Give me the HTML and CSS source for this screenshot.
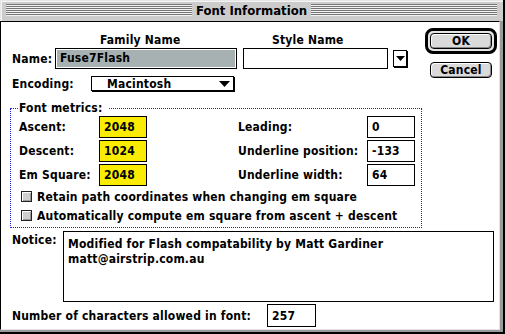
FILE: index.html
```html
<!DOCTYPE html>
<html>
<head>
<meta charset="utf-8">
<link rel="stylesheet" href="styles.css">
</head>
<body>
<div class="window">
  <div class="titlebar">
    <div class="stripes"></div>
    <div class="title">Font Information</div>
    <div class="stripes"></div>
  </div>
  <div class="content">
    <div class="top">
      <div class="fields">
        <div class="headers">
          <span class="h-family">Family Name</span>
          <span class="h-style">Style Name</span>
        </div>
        <div class="name-row">
          <span class="lbl-name">Name:</span>
          <div class="field f-family"><div class="hl">Fuse7Flash</div></div>
          <div class="field f-style"></div>
          <div class="dropbtn"><svg width="9" height="5" viewBox="0 0 9 5"><polygon points="0,0 9,0 4.5,5" fill="#000"/></svg></div>
        </div>
        <div class="enc-row">
          <span class="lbl-enc">Encoding:</span>
          <div class="popup"><span>Macintosh</span><svg width="11" height="6" viewBox="0 0 11 6"><polygon points="0,0 11,0 5.5,6" fill="#000"/></svg></div>
        </div>
      </div>
      <div class="buttons">
        <div class="okring"><div class="btn">OK</div></div>
        <div class="btn cancel">Cancel</div>
      </div>
    </div>
    <fieldset class="metrics">
      <legend>Font metrics:</legend>
      <div class="grid">
        <span>Ascent:</span><div class="num yellow">2048</div><span></span><span>Leading:</span><div class="num">0</div>
        <span>Descent:</span><div class="num yellow">1024</div><span></span><span>Underline position:</span><div class="num">-133</div>
        <span>Em Square:</span><div class="num yellow">2048</div><span></span><span>Underline width:</span><div class="num">64</div>
      </div>
      <div class="checks">
        <div class="check"><span class="cb"></span>Retain path coordinates when changing em square</div>
        <div class="check"><span class="cb"></span>Automatically compute em square from ascent + descent</div>
      </div>
    </fieldset>
    <div class="notice">
      <span class="lbl">Notice:</span>
      <div class="box">Modified for Flash compatability by Matt Gardiner<br>matt@airstrip.com.au</div>
    </div>
    <div class="count">
      <span class="lbl">Number of characters allowed in font:</span>
      <div class="num">257</div>
    </div>
  </div>
</div>
</body>
</html>
```
FILE: styles.css
```css
* { box-sizing: border-box; }
html, body { margin: 0; padding: 0; background: #fff; }
body {
  font-family: "DejaVu Sans Condensed", "DejaVu Sans", sans-serif;
  font-stretch: condensed;
  font-weight: bold;
  font-size: 12px;
  line-height: 14px;
  letter-spacing: 0.2px;
  color: #000;
}
.window {
  width: 505px;
  height: 334px;
  display: flex;
  flex-direction: column;
  background: #9a9a9a;
  border-right: 2px solid #000;
  border-bottom: 2px solid #000;
}
.titlebar {
  height: 21px;
  flex: none;
  display: flex;
  align-items: flex-start;
  padding: 0 6px;
  background: #cccccc;
  box-shadow: inset 1px 1px 0 #e6e6e6, inset 2px 2px 0 #f4f4f4;
}
.stripes {
  flex: 1;
  height: 12px;
  margin-top: 4px;
  background: repeating-linear-gradient(to bottom, #767676 0 1px, #f2f2f2 1px 2px);
}
.title {
  padding: 0 4px;
  font-size: 13px;
  line-height: 21px;
  letter-spacing: 0;
}
.content {
  flex: 1;
  background: #fff;
  border-top: 1px solid #000;
  border-left: 1px solid #000;
  border-right: 1px solid #e2e2e2;
  border-bottom: 1px solid #e2e2e2;
  margin: 0 3px 2px 0;
  padding: 6px 0 0 11px;
}
.top { display: flex; }
.fields { width: 413px; padding-top: 5px; }
.headers { display: flex; height: 14px; }
.h-family { margin-left: 88px; width: 172px; }
.name-row { display: flex; align-items: center; margin-top: 1px; height: 21px; }
.lbl-name { width: 43px; }
.field { border: 1px solid #000; background: #fff; height: 21px; }
.f-family { width: 182px; padding: 1px; }
.hl { background: #a7b1b1; height: 100%; padding-left: 3px; line-height: 17px; }
.f-style { width: 145px; margin-left: 6px; }
.dropbtn {
  margin-left: 5px;
  width: 14px;
  height: 17px;
  border: 1px solid #000;
  box-shadow: 1px 1px 0 #000;
  display: flex;
  align-items: center;
  justify-content: center;
  background: #fff;
}
.enc-row { display: flex; align-items: center; margin-top: 7px; }
.lbl-enc { width: 79px; }
.popup {
  width: 143px;
  height: 15px;
  border: 1px solid #000;
  box-shadow: 1px 1px 0 #000;
  display: flex;
  align-items: center;
  justify-content: space-between;
  padding: 0 3px 0 15px;
}
.buttons { display: flex; flex-direction: column; align-items: flex-start; }
.okring {
  border: 3px solid #000;
  border-radius: 8px;
  padding: 2px;
  background: #e4e4e4;
}
.btn {
  width: 62px;
  height: 16px;
  border: 1px solid #000;
  border-radius: 4px;
  background: #dadada;
  box-shadow: inset 1px 1px 0 #fff, inset -1px -1px 0 #8a8a8a;
  display: flex;
  align-items: center;
  justify-content: center;
}
.cancel { margin: 8px 0 0 5px; }
.metrics {
  margin: 10px 0 0 -2px;
  width: 412px;
  border: 1px dotted #1f1fe0;
  padding: 1px 5px 2px 8px;
  min-inline-size: 0;
}
.metrics legend { padding: 0 7px 0 1px; margin-left: -1px; line-height: 14px; }
.grid {
  display: grid;
  grid-template-columns: 80px 48px 91px 129px 48px;
  grid-auto-rows: 22px;
  row-gap: 2px;
  align-items: center;
}
.num {
  height: 22px;
  border: 1px solid #000;
  padding-left: 4px;
  display: flex;
  align-items: center;
  background: #fff;
}
.yellow { background: #f9ec00; }
.checks { margin-top: 1px; }
.check { display: flex; align-items: center; height: 19px; margin-left: 2px; }
.cb {
  width: 11px;
  height: 11px;
  margin-right: 5px;
  border: 1px solid #222;
  background: #cfcfcf;
  box-shadow: inset 1px 1px 0 #fff, inset -1px -1px 0 #999;
}
.notice { display: flex; margin-top: 3px; }
.notice .lbl { width: 51px; padding-top: 2px; }
.notice .box {
  width: 431px;
  height: 71px;
  border: 1px solid #000;
  padding: 5px 4px;
  line-height: 15px;
}
.count { display: flex; align-items: center; margin-top: 2px; }
.count .lbl { width: 255px; }
.count .num { width: 49px; height: 23px; }
```
